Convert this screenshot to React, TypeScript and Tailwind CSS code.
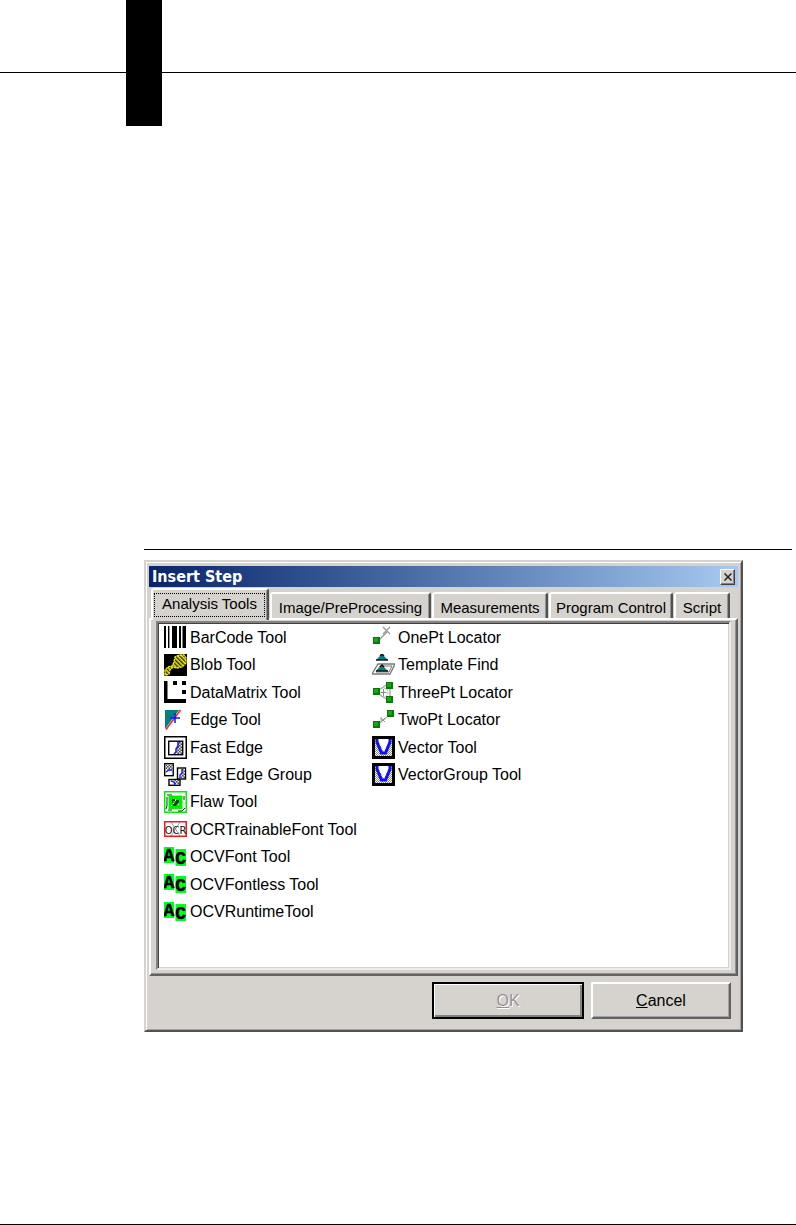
import { useState } from "react";
import type { ReactNode } from "react";

function Icon({ children }: { children: ReactNode }) {
  return (
    <svg viewBox="0 0 23 23" className="h-[23px] w-[23px] shrink-0" aria-hidden="true">
      {children}
    </svg>
  );
}

function Patterns() {
  return (
    <svg className="absolute h-0 w-0" aria-hidden="true">
      <defs>
        <pattern id="hatch" width="3" height="3" patternUnits="userSpaceOnUse">
          <rect width="3" height="3" fill="#e8e8e8" />
          <path d="M0 0h1.5v1.5H0zM1.5 1.5H3V3H1.5z" fill="#444" />
        </pattern>
        <pattern id="dots" width="2" height="2" patternUnits="userSpaceOnUse">
          <rect width="2" height="2" fill="#fff" />
          <path d="M0 0h1v1H0zM1 1h1v1H1z" fill="#888" />
        </pattern>
        <pattern id="stripes" width="3" height="3" patternUnits="userSpaceOnUse" patternTransform="rotate(-45)">
          <rect width="3" height="3" fill="#f4ec00" />
          <rect width="1.4" height="3" fill="#222200" />
        </pattern>
      </defs>
    </svg>
  );
}

const BarCode = () => (
  <Icon>
    <path d="M0 0h2v22H0zM4 0h1.4v22H4zM8 0h5v22H8zM15 0h2v22h-2zM18.500 0h3.500v22h-3.500z" fill="#000" />
  </Icon>
);

const Blob = () => (
  <Icon>
    <rect width="23" height="22" fill="#000" />
    <path
      d="M1 21v-5l3-3 4-1 2-4 1-5 4-2 5 0 2 3v5l-4 4-5 1-4-1-3 3-1 4-3 1z"
      fill="url(#stripes)"
      stroke="#f4ec00"
      strokeWidth="1.3"
      strokeDasharray="2.500 .6"
    />
  </Icon>
);

const DataMatrix = () => (
  <Icon>
    <path d="M0 0h3.500v18H22v4H0zM9 0h4v4H9zM18 0h4v4h-4zM18 9h4v4h-4z" fill="#000" />
  </Icon>
);

const Edge = () => (
  <Icon>
    <path d="M1 1h14L1 20z" fill="#008080" />
    <path d="M16.500 1L2 20.500" stroke="#ff2020" strokeWidth="1.5" />
    <path d="M11 4v10M6 9h10" stroke="#1010ff" strokeWidth="1.500" />
  </Icon>
);

const FastEdge = () => (
  <Icon>
    <rect x=".75" y=".75" width="21.500" height="21.500" fill="#fff" stroke="#000" strokeWidth="1.500" />
    <rect x="4.700" y="5.200" width="14" height="13.500" fill="#fff" stroke="#000" strokeWidth="1.400" />
    <path d="M14 6h4v12h-6z" fill="url(#hatch)" />
    <path d="M14 6v4l-2 3v3l-2 2" fill="none" stroke="#1515ff" strokeWidth="1.500" />
  </Icon>
);

const FastEdgeGroup = () => (
  <Icon>
    <g fill="#fff" stroke="#000" strokeWidth="1.400">
      <rect x=".7" y=".7" width="8.500" height="12" />
      <rect x="13.500" y="5" width="8" height="11" />
      <rect x="5" y="16.500" width="11" height="5.800" />
    </g>
    <path d="M1.400 1.400h7v5h-7zM18 6h3v9h-4zM10 17h5v4h-4z" fill="url(#hatch)" />
    <path d="M2 9l3-2h3M18 6v4l-2 2v3M7 18l3 1 1 3" fill="none" stroke="#1515ff" strokeWidth="1.400" />
  </Icon>
);

const Flaw = () => (
  <Icon>
    <rect x=".75" y=".75" width="21.500" height="20.500" fill="#fff" stroke="#00f000" strokeWidth="1.500" />
    <path d="M3 4h5M3 6v9l-1 3M4 19h4M14 20h4l3-3M20 5v4" fill="none" stroke="#222" strokeWidth="1" />
    <rect x="4.500" y="4.500" width="14" height="13.500" fill="#00f000" />
    <path d="M8 8h3v2H9v2H8zM12 9h3v2l-2 2-1 2h-3v-2l2-1z" fill="#063f06" />
    <path d="M11 8h1v2h-1zM9 12h1v1H9zM14 13h1v1h-1zM7 14h1v1H7z" fill="#fff" />
  </Icon>
);

const Ocr = () => (
  <Icon>
    <rect x=".75" y="3.750" width="21.500" height="14.500" fill="#fff" stroke="#f01818" strokeWidth="1.500" />
    <text x="11.500" y="16" textAnchor="middle" fontFamily="DejaVu Sans Condensed, DejaVu Sans, sans-serif" fontSize="11" fill="#111">
      OCR
    </text>
    <path d="M7 4l9 14M7 18l9-14" stroke="#555" strokeWidth=".6" />
  </Icon>
);

const Ocv = () => (
  <Icon>
    <rect width="10" height="16" y="1" fill="#00ff20" />
    <rect width="10.500" height="17" x="11.500" y="3" fill="#00ff20" />
    <g fontFamily="Liberation Mono, monospace" fontWeight="700" fontSize="18" fill="#000" stroke="#000" strokeWidth=".5" textAnchor="middle">
      <text x="5" y="15">A</text>
      <text x="16.700" y="17.500">C</text>
    </g>
  </Icon>
);

function Node({ x, y }: { x: number; y: number }) {
  return (
    <g>
      <rect x={x} y={y} width="7" height="7" fill="#087808" />
      <rect x={x + 1} y={y + 1} width="4" height="4" fill="#12a812" />
    </g>
  );
}

const OnePt = () => (
  <Icon>
    <path d="M7 14l8-8M11 1l7 7M18 1l-7 7" stroke="#999" strokeWidth="1.200" />
    <Node x={1} y={11} />
  </Icon>
);

const Template = () => (
  <Icon>
    <path d="M6 10h17l-5 10H0z" fill="#fff" stroke="#777" strokeWidth="1.300" />
    <path d="M8 12h12l-3 6H4z" fill="none" stroke="#777" strokeWidth="1" />
    <path d="M10 0l6 6H4zM10 11l6 6H4z" fill="#008088" />
    <path d="M4 6h12M4 17h12M8 2l2-2 2 2M8 13l2-2 2 2" fill="none" stroke="#111" strokeWidth="1.500" />
  </Icon>
);

const ThreePt = () => (
  <Icon>
    <path d="M7 9l7-5M7 13l7 5M18 7v9M11.500 8v7M8.500 11.500h6" fill="none" stroke="#888" strokeWidth="1" />
    <circle cx="11.500" cy="11.500" r="4.500" fill="none" stroke="#aaa" strokeWidth="1" strokeDasharray="2 1" />
    <Node x={1} y={7} />
    <Node x={14} y={1} />
    <Node x={14} y={15} />
  </Icon>
);

const TwoPt = () => (
  <Icon>
    <path d="M7 15l9-8M9 9l4 4M13 9l-4 4M9 8v5" stroke="#888" strokeWidth=".9" />
    <Node x={1} y={12} />
    <Node x={15} y={1} />
  </Icon>
);

const Vector = () => (
  <Icon>
    <rect x="1.500" y="1.500" width="20" height="20" fill="url(#dots)" stroke="#000" strokeWidth="3" />
    <path d="M5 3h13l-6 13z" fill="#fff" />
    <path d="M5 3v3l4.500 11h4L18 6V3" fill="none" stroke="#1010f4" strokeWidth="3" />
  </Icon>
);

const TABS = ["Analysis Tools", "Image/PreProcessing", "Measurements", "Program Control", "Script"];

const TAB_WIDTHS = ["w-[118px]", "w-[161px]", "w-[116px]", "w-[124px]", "w-[56px]"];

const TOOLS: { name: string; icon: () => ReactNode }[] = [
  { name: "BarCode Tool", icon: BarCode },
  { name: "Blob Tool", icon: Blob },
  { name: "DataMatrix Tool", icon: DataMatrix },
  { name: "Edge Tool", icon: Edge },
  { name: "Fast Edge", icon: FastEdge },
  { name: "Fast Edge Group", icon: FastEdgeGroup },
  { name: "Flaw Tool", icon: Flaw },
  { name: "OCRTrainableFont Tool", icon: Ocr },
  { name: "OCVFont Tool", icon: Ocv },
  { name: "OCVFontless Tool", icon: Ocv },
  { name: "OCVRuntimeTool", icon: Ocv },
  { name: "OnePt Locator", icon: OnePt },
  { name: "Template Find", icon: Template },
  { name: "ThreePt Locator", icon: ThreePt },
  { name: "TwoPt Locator", icon: TwoPt },
  { name: "Vector Tool", icon: Vector },
  { name: "VectorGroup Tool", icon: Vector },
];

function InsertStepDialog() {
  const [active, setActive] = useState(0);
  return (
    <div
      role="dialog"
      aria-labelledby="dialog-title"
      className="w-full max-w-[599px] border-2 border-t-[#d6d3ce] border-r-[#525152] border-b-[#525152] border-l-[#d6d3ce] bg-[#d6d3ce] px-[3px] pt-1 pb-[11px] shadow-[inset_1px_1px_0_#fff,inset_-1px_-1px_0_#a5a2a5]"
    >
      <div className="flex h-[21px] items-center justify-between bg-linear-to-r from-[#0a246a] to-[#a6caf0] pr-[3px] pl-[3px]">
        <h1 id="dialog-title" className="font-['DejaVu_Sans_Condensed','DejaVu_Sans',sans-serif] text-[16px] leading-5 font-bold text-white">
          Insert Step
        </h1>
        <button
          type="button"
          aria-label="Close"
          className="flex h-4 w-[15px] items-center justify-center border border-t-white border-r-[#424142] border-b-[#424142] border-l-white bg-[#d6d3ce] shadow-[inset_-1px_-1px_0_#848284]"
        >
          <svg viewBox="0 0 8 8" className="h-2 w-2" aria-hidden="true">
            <path d="M.5.500l7 7M7.500.500l-7 7" stroke="#222" strokeWidth="1.500" />
          </svg>
        </button>
      </div>

      <div role="tablist" className="mt-px flex h-[30px] items-end pl-[2px] text-[15px]">
        {TABS.map((tab, i) => (
          <button
            key={tab}
            type="button"
            role="tab"
            aria-selected={i === active}
            onClick={() => setActive(i)}
            className={`${TAB_WIDTHS[i]} ${
              i === active ? "z-10 -mb-[2px] h-8 px-px pt-[3px] pb-[3px]" : "h-[26px] px-[2px] pt-[3px]"
            } mr-px flex shrink-0 items-center justify-center rounded-t-[3px] border-t-2 border-r-2 border-l-2 border-t-white border-r-[#525152] border-l-white bg-[#d6d3ce] whitespace-nowrap shadow-[inset_-1px_0_0_#949294] last:mr-0`}
          >
            <span
              className={
                i === active
                  ? "mr-px flex h-full w-full justify-center border border-dotted border-black leading-5"
                  : "leading-5"
              }
            >
              {tab}
            </span>
          </button>
        ))}
      </div>

      <div
        role="tabpanel"
        className="border-2 border-t-white border-r-[#636163] border-b-[#636163] border-l-white pt-px pr-[5px] pb-1 pl-[5px] shadow-[inset_-1px_-1px_0_#949294]"
      >
        <div className="border-2 border-t-[#848284] border-r-[#eeece8] border-b-[#eeece8] border-l-[#848284] bg-white pt-px pr-px pb-[42px] pl-[6px] shadow-[inset_1px_1px_0_#424142,inset_-1px_-1px_0_#d6d3ce]">
          <ul className="grid h-[302px] grid-flow-col grid-cols-[208px_auto] grid-rows-11 justify-start">
            {TOOLS.map(({ name, icon: ToolIcon }) => (
              <li key={name} className="flex min-h-0 items-center gap-[3px] whitespace-nowrap">
                <ToolIcon />
                <span className="leading-5">{name}</span>
              </li>
            ))}
          </ul>
        </div>
      </div>

      <div className="mt-[6px] flex items-start justify-end gap-[7px] pr-[7px]">
        <button
          type="button"
          disabled
          className="h-[37px] w-[152px] border-2 border-black bg-[#d6d3ce] text-[#949294] shadow-[inset_1px_1px_0_#fff,inset_-2px_-2px_0_#848284] [text-shadow:1px_1px_0_#fff]"
        >
          <span className="underline">O</span>K
        </button>
        <button
          type="button"
          className="h-[37px] w-[140px] border-2 border-t-white border-r-[#636163] border-b-[#636163] border-l-white bg-[#d6d3ce] shadow-[inset_-1px_-1px_0_#a5a2a5]"
        >
          <span className="underline">C</span>ancel
        </button>
      </div>
    </div>
  );
}

export default function App() {
  return (
    <div className="flex min-h-screen flex-col border-b border-black bg-white font-['Liberation_Sans',Arial,sans-serif] text-[16px] text-black">
      <Patterns />
      <header className="flex items-start">
        <div className="h-[73px] w-[126px] border-b border-black" />
        <div className="h-[126px] w-9 bg-black" />
        <div className="h-[73px] flex-1 border-b border-black" />
      </header>
      <main className="mt-[423px] mr-1 mb-12 ml-36 border-t border-black pt-[10px]">
        <InsertStepDialog />
      </main>
    </div>
  );
}
